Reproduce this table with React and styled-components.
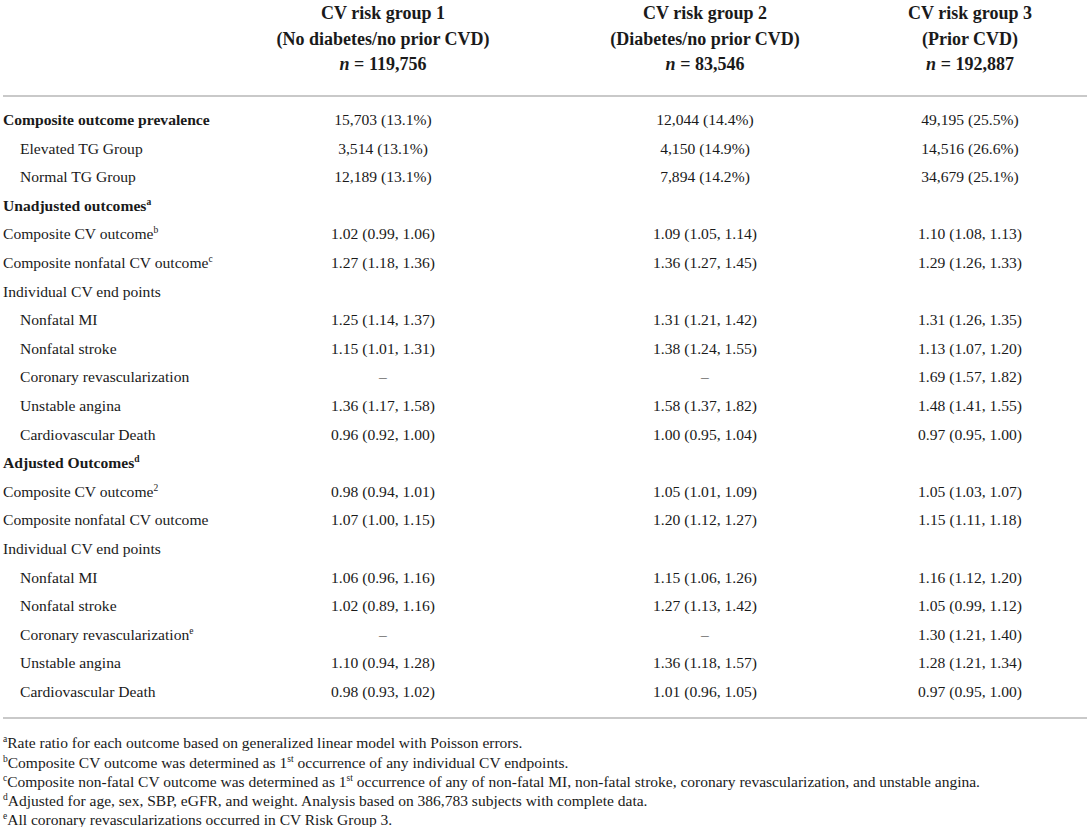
import styled, { createGlobalStyle } from "styled-components"

const Global = createGlobalStyle`
  body {
    margin: 0;
    background: #fff;
    color: #1a1a1a;
    font-family: "Liberation Serif", "Times New Roman", serif;
  }
`

const Page = styled.div`
  padding: 0 4px 0 3px;
`

const Grid = styled.div`
  display: grid;
  grid-template-columns: 245px 270px 374px 156px 1fr;
`

const HeadCell = styled.div`
  grid-column: ${p => p.col};
  text-align: center;
  font-weight: bold;
  font-size: 18px;
  line-height: 25.5px;
  padding-top: 1px;
  height: 80px;
`

const Rule = styled.div`
  grid-column: 1 / -1;
  height: 2px;
  background: #c9c9c9;
  margin: ${p => p.$m || "0"};
`

const Label = styled.div`
  grid-column: 1;
  font-size: 15.6px;
  line-height: 28.6px;
  white-space: nowrap;
  font-weight: ${p => (p.$bold ? "bold" : "normal")};
  padding-left: ${p => (p.$indent ? "17px" : "0")};
`

const Value = styled.div`
  font-size: 15.6px;
  line-height: 28.6px;
  text-align: center;
  white-space: nowrap;
`

const Sup = styled.sup`
  font-size: 9.5px;
  line-height: 0;
  vertical-align: 6px;
`

const Notes = styled.div`
  padding-top: 14px;
  font-size: 15.5px;
  line-height: 19.2px;
`

const Note = styled.div`
  white-space: nowrap;
`

const rows = [
  { label: "Composite outcome prevalence", bold: true, v: ["15,703 (13.1%)", "12,044 (14.4%)", "49,195 (25.5%)"] },
  { label: "Elevated TG Group", indent: true, v: ["3,514 (13.1%)", "4,150 (14.9%)", "14,516 (26.6%)"] },
  { label: "Normal TG Group", indent: true, v: ["12,189 (13.1%)", "7,894 (14.2%)", "34,679 (25.1%)"] },
  { label: "Unadjusted outcomes", sup: "a", bold: true },
  { label: "Composite CV outcome", sup: "b", v: ["1.02 (0.99, 1.06)", "1.09 (1.05, 1.14)", "1.10 (1.08, 1.13)"] },
  { label: "Composite nonfatal CV outcome", sup: "c", v: ["1.27 (1.18, 1.36)", "1.36 (1.27, 1.45)", "1.29 (1.26, 1.33)"] },
  { label: "Individual CV end points" },
  { label: "Nonfatal MI", indent: true, v: ["1.25 (1.14, 1.37)", "1.31 (1.21, 1.42)", "1.31 (1.26, 1.35)"] },
  { label: "Nonfatal stroke", indent: true, v: ["1.15 (1.01, 1.31)", "1.38 (1.24, 1.55)", "1.13 (1.07, 1.20)"] },
  { label: "Coronary revascularization", indent: true, v: ["–", "–", "1.69 (1.57, 1.82)"] },
  { label: "Unstable angina", indent: true, v: ["1.36 (1.17, 1.58)", "1.58 (1.37, 1.82)", "1.48 (1.41, 1.55)"] },
  { label: "Cardiovascular Death", indent: true, v: ["0.96 (0.92, 1.00)", "1.00 (0.95, 1.04)", "0.97 (0.95, 1.00)"] },
  { label: "Adjusted Outcomes", sup: "d", bold: true },
  { label: "Composite CV outcome", sup: "2", v: ["0.98 (0.94, 1.01)", "1.05 (1.01, 1.09)", "1.05 (1.03, 1.07)"] },
  { label: "Composite nonfatal CV outcome", v: ["1.07 (1.00, 1.15)", "1.20 (1.12, 1.27)", "1.15 (1.11, 1.18)"] },
  { label: "Individual CV end points" },
  { label: "Nonfatal MI", indent: true, v: ["1.06 (0.96, 1.16)", "1.15 (1.06, 1.26)", "1.16 (1.12, 1.20)"] },
  { label: "Nonfatal stroke", indent: true, v: ["1.02 (0.89, 1.16)", "1.27 (1.13, 1.42)", "1.05 (0.99, 1.12)"] },
  { label: "Coronary revascularization", sup: "e", indent: true, v: ["–", "–", "1.30 (1.21, 1.40)"] },
  { label: "Unstable angina", indent: true, v: ["1.10 (0.94, 1.28)", "1.36 (1.18, 1.57)", "1.28 (1.21, 1.34)"] },
  { label: "Cardiovascular Death", indent: true, v: ["0.98 (0.93, 1.02)", "1.01 (0.96, 1.05)", "0.97 (0.95, 1.00)"] },
]

const heads = [
  ["CV risk group 1", "(No diabetes/no prior CVD)", "119,756"],
  ["CV risk group 2", "(Diabetes/no prior CVD)", "83,546"],
  ["CV risk group 3", "(Prior CVD)", "192,887"],
]

export default function App() {
  return (
    <Page>
      <Global />
      <Grid>
        {heads.map((h, i) => (
          <HeadCell key={i} col={i + 2}>
            {h[0]}<br />{h[1]}<br /><i>n</i> = {h[2]}
          </HeadCell>
        ))}
        <Rule $m="14px 0 9px" />
        {rows.map((r, i) => (
          <Row key={i} r={r} />
        ))}
        <Rule $m="11px 0 0" />
      </Grid>
      <Notes>
        <Note><Sup>a</Sup>Rate ratio for each outcome based on generalized linear model with Poisson errors.</Note>
        <Note><Sup>b</Sup>Composite CV outcome was determined as 1<Sup>st</Sup> occurrence of any individual CV endpoints.</Note>
        <Note><Sup>c</Sup>Composite non-fatal CV outcome was determined as 1<Sup>st</Sup> occurrence of any of non-fatal MI, non-fatal stroke, coronary revascularization, and unstable angina.</Note>
        <Note><Sup>d</Sup>Adjusted for age, sex, SBP, eGFR, and weight. Analysis based on 386,783 subjects with complete data.</Note>
        <Note><Sup>e</Sup>All coronary revascularizations occurred in CV Risk Group 3.</Note>
      </Notes>
    </Page>
  )
}

function Row({ r }) {
  const v = r.v || ["", "", ""]
  return (
    <>
      <Label $bold={r.bold} $indent={r.indent}>
        {r.label}{r.sup && <Sup>{r.sup}</Sup>}
      </Label>
      {v.map((x, j) => (
        <Value key={j}>{x}</Value>
      ))}
      <div />
    </>
  )
}
